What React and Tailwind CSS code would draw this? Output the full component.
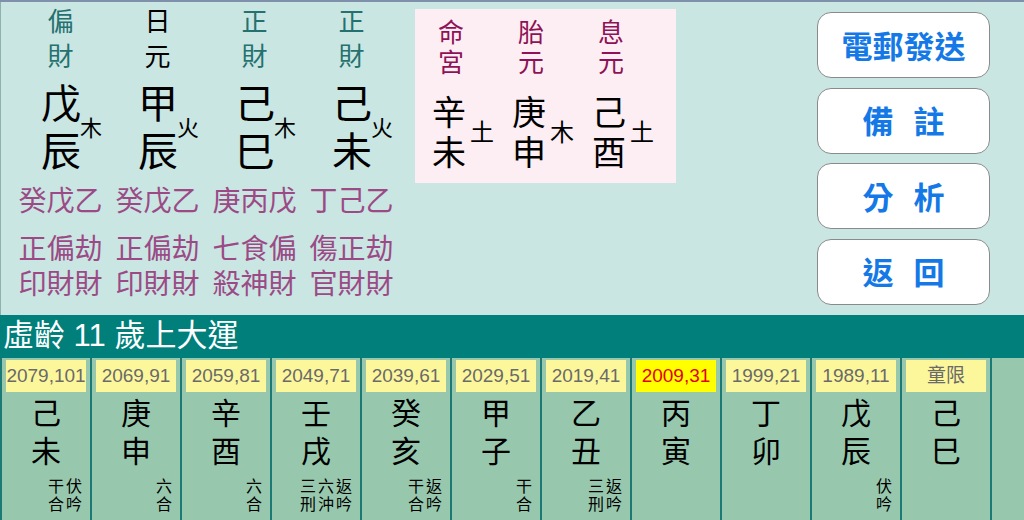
import React from 'react';

const pillars = [
  { label: ['偏', '財'], labelColor: 'text-[#25716f]', stem: '戊', branch: '辰', el: '木', hidden: '癸戊乙', gods: ['正偏劫', '印財財'] },
  { label: ['日', '元'], labelColor: 'text-black', stem: '甲', branch: '辰', el: '火', hidden: '癸戊乙', gods: ['正偏劫', '印財財'] },
  { label: ['正', '財'], labelColor: 'text-[#25716f]', stem: '己', branch: '巳', el: '木', hidden: '庚丙戊', gods: ['七食偏', '殺神財'] },
  { label: ['正', '財'], labelColor: 'text-[#25716f]', stem: '己', branch: '未', el: '火', hidden: '丁己乙', gods: ['傷正劫', '官財財'] },
];

const palaces = [
  { label: ['命', '宮'], stem: '辛', branch: '未', el: '土' },
  { label: ['胎', '元'], stem: '庚', branch: '申', el: '木' },
  { label: ['息', '元'], stem: '己', branch: '酉', el: '土' },
];

const luck = [
  { year: '2079,101', stem: '己', branch: '未', note: ['干伏', '合吟'] },
  { year: '2069,91', stem: '庚', branch: '申', note: ['六', '合'] },
  { year: '2059,81', stem: '辛', branch: '酉', note: ['六', '合'] },
  { year: '2049,71', stem: '壬', branch: '戌', note: ['三六返', '刑沖吟'] },
  { year: '2039,61', stem: '癸', branch: '亥', note: ['干返', '合吟'] },
  { year: '2029,51', stem: '甲', branch: '子', note: ['干', '合'] },
  { year: '2019,41', stem: '乙', branch: '丑', note: ['三返', '刑吟'] },
  { year: '2009,31', stem: '丙', branch: '寅', note: null, current: true },
  { year: '1999,21', stem: '丁', branch: '卯', note: null },
  { year: '1989,11', stem: '戊', branch: '辰', note: ['伏', '吟'] },
  { year: '童限', stem: '己', branch: '巳', note: null },
];

const buttons = [['電郵發送'], ['備', '註'], ['分', '析'], ['返', '回']];

const Pillar = ({ p }) => (
  <div className="w-[97px] flex flex-col items-center">
    <div className={`text-[26px] leading-[35px] text-center ${p.labelColor}`}>
      <div>{p.label[0]}</div>
      <div>{p.label[1]}</div>
    </div>
    <div className="mt-[5px] flex items-center">
      <div className="text-[40px] leading-[48px] text-black text-center">
        <div>{p.stem}</div>
        <div>{p.branch}</div>
      </div>
      <span className="w-0 whitespace-nowrap text-[22px] leading-none text-black -ml-[1px] mt-[2px]">{p.el}</span>
    </div>
    <div className="mt-[8px] text-[28px] leading-[35px] text-[#9b4a86] whitespace-nowrap">{p.hidden}</div>
    <div className="mt-[13px] text-[28px] leading-[35px] text-[#9b4a86] whitespace-nowrap">
      <div>{p.gods[0]}</div>
      <div>{p.gods[1]}</div>
    </div>
  </div>
);

const Palace = ({ p }) => (
  <div className="w-[56px] flex flex-col items-center">
    <div className="text-[26px] leading-[30px] text-[#8f1157] text-center">
      <div>{p.label[0]}</div>
      <div>{p.label[1]}</div>
    </div>
    <div className="mt-[15px] flex items-center">
      <div className="text-[34px] leading-[40px] text-black text-center">
        <div>{p.stem}</div>
        <div>{p.branch}</div>
      </div>
      <span className="w-0 whitespace-nowrap text-[24px] leading-none text-black pl-[4px]">{p.el}</span>
    </div>
  </div>
);

const LuckColumn = ({ c }) => (
  <div className="w-[90px] shrink-0 border-r-2 border-[#1b7a76] flex flex-col">
    <div
      className={`mx-[4px] mt-[2px] h-[32px] flex items-center justify-center text-[19px] ${
        c.current ? 'bg-[#ffff00] text-[#e3000f]' : 'bg-[#fdf79c] text-[#6a6a6a]'
      }`}
    >
      {c.year}
    </div>
    <div className="mt-[3px] text-[30px] leading-[38px] text-black text-center">
      <div>{c.stem}</div>
      <div>{c.branch}</div>
    </div>
    {c.note && (
      <div className="mt-[7px] pr-[6px] text-[16px] leading-[18px] tracking-[2px] text-black text-right">
        <div>{c.note[0]}</div>
        <div>{c.note[1]}</div>
      </div>
    )}
  </div>
);

export default function App() {
  return (
    <div className="w-[1024px] h-[520px] overflow-hidden bg-[#c9e6e3] font-['Liberation_Sans','Noto_Sans_CJK_TC',sans-serif] border-t-2 border-[#7f90ab] flex flex-col">
      {/* top: pillars, palaces, buttons */}
      <div className="h-[313px] flex border-l border-[#8fb1ae]">
        <div className="flex pl-[11px] pt-[3px]">
          {pillars.map((p, i) => (
            <Pillar key={i} p={p} />
          ))}
        </div>
        <div className="ml-[15px] mt-[7px] w-[261px] h-[174px] bg-[#fdeef3] flex gap-[24px] pl-[8px] pt-[9px]">
          {palaces.map((p, i) => (
            <Palace key={i} p={p} />
          ))}
        </div>
        <div className="ml-auto mr-[34px] mt-[10px] flex flex-col gap-[9.5px]">
          {buttons.map((b, i) => (
            <button
              key={i}
              className="w-[173px] h-[66px] rounded-[14px] bg-white border-[1.5px] border-[#8a8a8a] flex items-center justify-center gap-[20px] text-[31px] font-bold text-[#1479e6] font-['Noto_Sans_CJK_TC',sans-serif]"
            >
              {b.map((t, j) => (
                <span key={j}>{t}</span>
              ))}
            </button>
          ))}
        </div>
      </div>

      {/* major luck title */}
      <div className="h-[43px] bg-[#007f7b] flex items-center pl-[3px] text-white text-[31px]">
        虛齡 11 歲上大運
      </div>

      {/* luck columns */}
      <div className="flex-1 flex bg-[#97c8ad] border-l-2 border-[#1b7a76]">
        {luck.map((c, i) => (
          <LuckColumn key={i} c={c} />
        ))}
      </div>
    </div>
  );
}
